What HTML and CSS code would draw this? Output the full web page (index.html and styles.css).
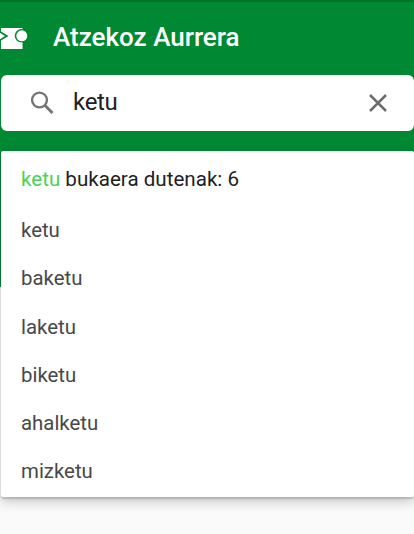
FILE: index.html
```html
<!DOCTYPE html>
<html lang="eu">
<head>
<meta charset="utf-8">
<title>Atzekoz Aurrera</title>
<link rel="stylesheet" href="styles.css">
</head>
<body>
<header class="app-bar">
  <svg class="logo" width="28" height="22" viewBox="0 0 28 22">
    <path d="M1 0H22.5V21H1V12.5L8.5 8L1 3.5Z" fill="#fff"/>
    <path d="M0 4.8L5 8L0 11.2Z" fill="#fff"/>
    <circle cx="21.5" cy="7.8" r="6.8" fill="#018832"/>
    <circle cx="21.8" cy="7.8" r="5.5" fill="#fff"/>
  </svg>
  <h1 class="title">Atzekoz Aurrera</h1>
</header>
<main>
  <div class="search">
    <svg class="search-icon" width="24" height="24" viewBox="0 0 24 24" fill="none" stroke="#757575">
      <circle cx="9.5" cy="9" r="7.4" stroke-width="2.4"/>
      <path d="M14.8 14.3L22.5 22" stroke-width="3"/>
    </svg>
    <span class="query">ketu</span>
    <svg class="clear" width="18" height="18" viewBox="0 0 18 18" fill="none" stroke="#6c6c6c" stroke-width="2.5">
      <path d="M1 1L17 17M17 1L1 17"/>
    </svg>
  </div>
  <section class="results">
    <h2 class="summary"><span class="term">ketu</span> bukaera dutenak: 6</h2>
    <ul class="words">
      <li>ketu</li>
      <li>baketu</li>
      <li>laketu</li>
      <li>biketu</li>
      <li>ahalketu</li>
      <li>mizketu</li>
    </ul>
  </section>
</main>
</body>
</html>
```
FILE: styles.css
```css
* {
  box-sizing: border-box;
}

body {
  margin: 0;
  height: 534px;
  overflow: hidden;
  font-family: Roboto, sans-serif;
  background: linear-gradient(#018832 287px, #fafafa 287px);
}

.app-bar {
  display: flex;
  align-items: center;
  height: 75px;
  border-top: 2px solid #017329;
}

.logo {
  margin-right: 25px;
}

.title {
  margin: 0;
  padding-bottom: 3px;
  font-size: 26px;
  font-weight: 500;
  line-height: 30px;
  color: #fff;
}

.search {
  display: flex;
  align-items: center;
  height: 56px;
  margin: 0 0 20px 1px;
  padding: 0 27px 0 29px;
  border-radius: 6px;
  background: #fff;
}

.query {
  flex: 1;
  margin-left: 19px;
  padding-bottom: 2px;
  font-size: 24px;
  letter-spacing: -0.3px;
  color: #212121;
}

.results {
  height: 346px;
  margin-left: 1px;
  padding: 0 20px;
  border-radius: 2px;
  background: #fff;
  box-shadow: 0 2px 2px rgba(0, 0, 0, 0.16), 0 5px 12px rgba(0, 0, 0, 0.2);
}

.summary {
  margin: 0;
  padding-top: 3px;
  font-size: 20.6px;
  font-weight: 400;
  line-height: 51px;
  color: #212121;
}

.term {
  color: #4cd055;
}

.words {
  margin: 0;
  padding: 1px 0 0;
  list-style: none;
  font-size: 20.4px;
  line-height: 48.3px;
  color: #484848;
}
```
